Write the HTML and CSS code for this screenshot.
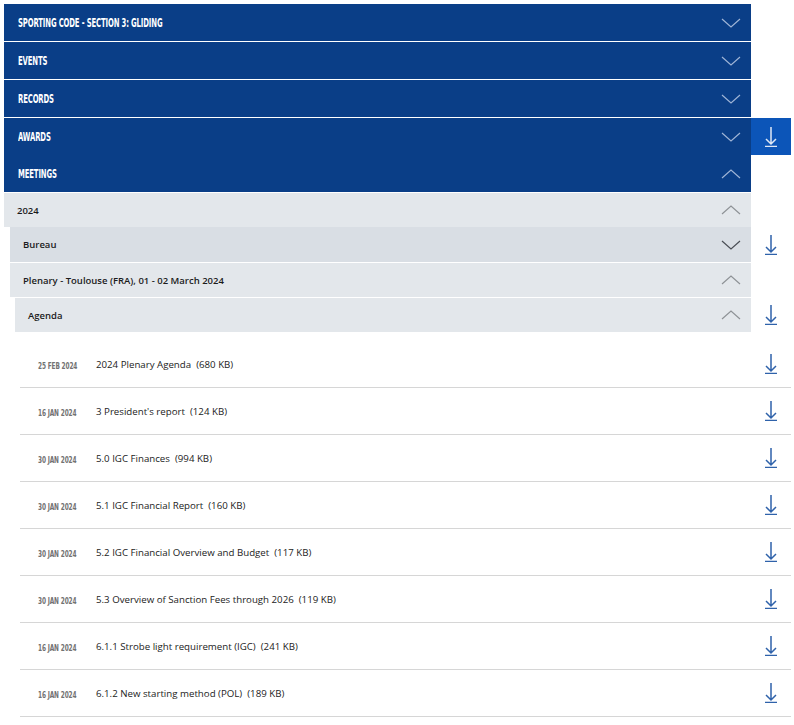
FILE: index.html
```html
<!DOCTYPE html>
<html>
<head>
<meta charset="utf-8">
<link rel="stylesheet" href="styles.css">
</head>
<body>
<div class="acc">
  <div class="row"><div class="bar"><span class="bar-title">Sporting Code - Section 3: Gliding</span><svg class="chev" viewBox="0 0 20 10"><path d="M1 1 L10 9 L19 1"/></svg></div><div class="side"></div></div>
  <div class="row sep"><div class="bar"><span class="bar-title">Events</span><svg class="chev" viewBox="0 0 20 10"><path d="M1 1 L10 9 L19 1"/></svg></div><div class="side"></div></div>
  <div class="row sep"><div class="bar"><span class="bar-title">Records</span><svg class="chev" viewBox="0 0 20 10"><path d="M1 1 L10 9 L19 1"/></svg></div><div class="side"></div></div>
  <div class="row sep"><div class="bar"><span class="bar-title">Awards</span><svg class="chev" viewBox="0 0 20 10"><path d="M1 1 L10 9 L19 1"/></svg></div><div class="side side-btn"><svg class="dl" viewBox="0 0 14 20"><path d="M7 0 V17 M2 12 L7 17 L12 12 M1 19.5 H13"/></svg></div></div>
  <div class="row"><div class="bar"><span class="bar-title">Meetings</span><svg class="chev" viewBox="0 0 20 10"><path d="M1 9 L10 1 L19 9"/></svg></div><div class="side"></div></div>

  <div class="row sep"><div class="sub sub-2024"><span>2024</span><svg class="chev gray" viewBox="0 0 20 10"><path d="M1 9 L10 1 L19 9"/></svg></div><div class="side"></div></div>
  <div class="row"><div class="sub sub-bureau"><span>Bureau</span><svg class="chev dark" viewBox="0 0 20 10"><path d="M1 1 L10 9 L19 1"/></svg></div><div class="side"><svg class="dl" viewBox="0 0 14 20"><path d="M7 0 V17 M2 12 L7 17 L12 12 M1 19.5 H13"/></svg></div></div>
  <div class="row sep"><div class="sub sub-plenary"><span>Plenary - Toulouse (FRA), 01 - 02 March 2024</span><svg class="chev gray" viewBox="0 0 20 10"><path d="M1 9 L10 1 L19 9"/></svg></div><div class="side"></div></div>
  <div class="row sep"><div class="sub sub-agenda"><span>Agenda</span><svg class="chev gray" viewBox="0 0 20 10"><path d="M1 9 L10 1 L19 9"/></svg></div><div class="side"><svg class="dl" viewBox="0 0 14 20"><path d="M7 0 V17 M2 12 L7 17 L12 12 M1 19.5 H13"/></svg></div></div>

  <ul class="files">
    <li class="file"><span class="date"><span class="date-text">25 Feb 2024</span></span><span class="name">2024 Plenary Agenda&nbsp; (680 KB)</span><svg class="dl" viewBox="0 0 14 20"><path d="M7 0 V17 M2 12 L7 17 L12 12 M1 19.5 H13"/></svg></li>
    <li class="file"><span class="date"><span class="date-text">16 Jan 2024</span></span><span class="name">3 President's report&nbsp; (124 KB)</span><svg class="dl" viewBox="0 0 14 20"><path d="M7 0 V17 M2 12 L7 17 L12 12 M1 19.5 H13"/></svg></li>
    <li class="file"><span class="date"><span class="date-text">30 Jan 2024</span></span><span class="name">5.0 IGC Finances&nbsp; (994 KB)</span><svg class="dl" viewBox="0 0 14 20"><path d="M7 0 V17 M2 12 L7 17 L12 12 M1 19.5 H13"/></svg></li>
    <li class="file"><span class="date"><span class="date-text">30 Jan 2024</span></span><span class="name">5.1 IGC Financial Report&nbsp; (160 KB)</span><svg class="dl" viewBox="0 0 14 20"><path d="M7 0 V17 M2 12 L7 17 L12 12 M1 19.5 H13"/></svg></li>
    <li class="file"><span class="date"><span class="date-text">30 Jan 2024</span></span><span class="name">5.2 IGC Financial Overview and Budget&nbsp; (117 KB)</span><svg class="dl" viewBox="0 0 14 20"><path d="M7 0 V17 M2 12 L7 17 L12 12 M1 19.5 H13"/></svg></li>
    <li class="file"><span class="date"><span class="date-text">30 Jan 2024</span></span><span class="name">5.3 Overview of Sanction Fees through 2026&nbsp; (119 KB)</span><svg class="dl" viewBox="0 0 14 20"><path d="M7 0 V17 M2 12 L7 17 L12 12 M1 19.5 H13"/></svg></li>
    <li class="file"><span class="date"><span class="date-text">16 Jan 2024</span></span><span class="name">6.1.1 Strobe light requirement (IGC)&nbsp; (241 KB)</span><svg class="dl" viewBox="0 0 14 20"><path d="M7 0 V17 M2 12 L7 17 L12 12 M1 19.5 H13"/></svg></li>
    <li class="file"><span class="date"><span class="date-text">16 Jan 2024</span></span><span class="name">6.1.2 New starting method (POL)&nbsp; (189 KB)</span><svg class="dl" viewBox="0 0 14 20"><path d="M7 0 V17 M2 12 L7 17 L12 12 M1 19.5 H13"/></svg></li>
  </ul>
</div>
</body>
</html>
```
FILE: styles.css
```css
html, body {
  margin: 0;
  background: #fff;
}
body {
  padding: 4px;
  font-family: "Open Sans", "Noto Sans", sans-serif;
}
.acc {
  width: 787px;
}
.row {
  display: flex;
}
.row.sep {
  margin-top: 1px;
}
.bar {
  flex: 1;
  height: 37px;
  background: #0a3e87;
  display: flex;
  align-items: center;
  justify-content: space-between;
  padding: 0 10px 0 14px;
  box-sizing: border-box;
}
.bar-title {
  display: inline-block;
  font-family: "DejaVu Sans Condensed", "DejaVu Sans", sans-serif;
  font-weight: bold;
  font-size: 11.5px;
  letter-spacing: -0.2px;
  text-transform: uppercase;
  color: #fff;
  transform: scaleX(0.665);
  transform-origin: left center;
  white-space: nowrap;
}
.side {
  width: 40px;
  flex: none;
  display: flex;
  align-items: center;
  justify-content: center;
}
.side-btn {
  background: #0c55b8;
}
.side-btn .dl path {
  stroke: #dfe8f5;
}
.chev {
  width: 20px;
  height: 10px;
  flex: none;
}
.chev path {
  fill: none;
  stroke: #9fb4d6;
  stroke-width: 1.2;
}
.chev.gray path {
  stroke: #8e9296;
}
.chev.dark path {
  stroke: #4a4e55;
}
.sub {
  flex: 1;
  display: flex;
  align-items: center;
  justify-content: space-between;
  padding: 0 10px 0 13px;
  box-sizing: border-box;
  font-size: 9.5px;
  font-weight: 600;
  color: #1b1b1b;
  background: #e3e7eb;
}
.sub-2024 {
  height: 34px;
}
.sub-bureau {
  height: 35px;
  margin-left: 6px;
  background: #d9dee4;
}
.sub-plenary {
  height: 34px;
  margin-left: 6px;
}
.sub-agenda {
  height: 34px;
  margin-left: 11px;
}
.dl {
  width: 14px;
  height: 20px;
  flex: none;
}
.dl path {
  fill: none;
  stroke: #2f62aa;
  stroke-width: 1.5;
}
.files {
  list-style: none;
  margin: 9px 0 0 16px;
  padding: 0;
}
.file {
  height: 46px;
  border-bottom: 1px solid #d6d6d6;
  display: flex;
  align-items: center;
  padding: 0 13px 0 18px;
}
.date {
  width: 58px;
  flex: none;
  line-height: 1;
}
.date-text {
  display: inline-block;
  font-family: "DejaVu Sans Condensed", "DejaVu Sans", sans-serif;
  font-weight: bold;
  font-size: 9px;
  letter-spacing: -0.2px;
  text-transform: uppercase;
  color: #727272;
  transform: translateY(-1.5px) scaleX(0.72);
  transform-origin: left center;
  white-space: nowrap;
}
.name {
  flex: 1;
  font-size: 9.7px;
  color: #222;
}
```
